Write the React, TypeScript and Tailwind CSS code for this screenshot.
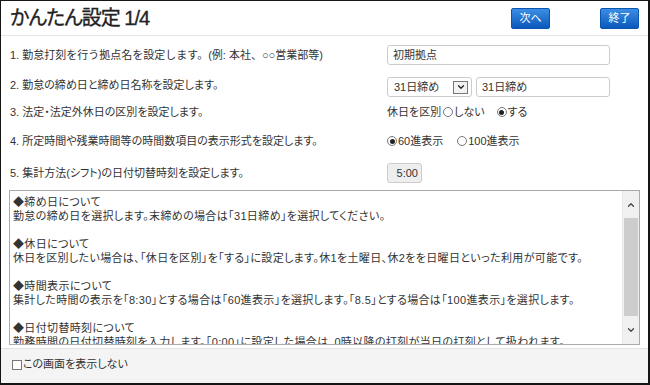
import React from "react";
import { ChevronDown, ChevronUp } from "lucide-react";

const rows = [
  "1. 勤怠打刻を行う拠点名を設定します。(例:  本社、○○営業部等)",
  "2. 勤怠の締め日と締め日名称を設定します。",
  "3. 法定・法定外休日の区別を設定します。",
  "4. 所定時間や残業時間等の時間数項目の表示形式を設定します。",
  "5. 集計方法(シフト)の日付切替時刻を設定します。",
];

const helpLines = [
  "◆締め日について",
  "勤怠の締め日を選択します。末締めの場合は「31日締め」を選択してください。",
  "",
  "◆休日について",
  "休日を区別したい場合は、「休日を区別」を「する」に設定します。休1を土曜日、休2をを日曜日といった利用が可能です。",
  "",
  "◆時間表示について",
  "集計した時間の表示を「8:30」とする場合は「60進表示」を選択します。「8.5」とする場合は「100進表示」を選択します。",
  "",
  "◆日付切替時刻について",
  "勤務時間の日付切替時刻を入力します。「0:00」に設定した場合は、0時以降の打刻が当日の打刻として扱われます。",
];

const Radio = ({ checked }: { checked?: boolean }) => (
  <span className="inline-flex items-center justify-center w-[10px] h-[10px] rounded-full border border-[#777] bg-white mr-[1px]">
    {checked && <span className="w-[5px] h-[5px] rounded-full bg-[#222]" />}
  </span>
);

const BlueButton = ({ label }: { label: string }) => (
  <button className="w-[39px] h-[21px] rounded-[2px] border border-[#0b56ac] bg-gradient-to-b from-[#3b8ee6] to-[#0858bb] text-white text-[11px] leading-none">
    {label}
  </button>
);

const App = () => {
  return (
    <div className="w-[650px] h-[385px] flex flex-col bg-white border-t border-l border-r-2 border-b-2 border-[#151515] text-[#333] text-[11px] font-['Liberation_Sans','Noto_Sans_CJK_JP',sans-serif] [font-feature-settings:'palt']">
      {/* header */}
      <div className="h-[35px] shrink-0 flex items-center justify-between pl-[9px] pr-[9px] border-b border-[#e6e6e6]">
        <h1 className="text-[20px] text-[#222] tracking-[-1px] [-webkit-text-stroke:0.3px_#222]">かんたん設定 1/4</h1>
        <div className="flex gap-[50px]">
          <BlueButton label="次へ" />
          <BlueButton label="終了" />
        </div>
      </div>

      {/* settings rows */}
      <div className="pt-[9px] pl-[9px] pr-[38px]">
        <div className="h-[20px] flex items-center">
          <span className="w-[377px] [font-feature-settings:normal]">{rows[0]}</span>
          <div className="flex-1 h-[20px] flex items-center px-[5px] border border-[#ccc] rounded-[3px]">初期拠点</div>
        </div>
        <div className="h-[20px] mt-[12px] flex items-center">
          <span className="w-[377px] -mt-[3px]">{rows[1]}</span>
          <div className="w-[85px] h-[20px] flex items-center justify-between pl-[6px] pr-[3px] border border-[#ccc] rounded-[3px]">
            <span>31日締め</span>
            <span className="w-[15px] h-[13px] flex items-center justify-center border border-[#777] bg-[#f2f2f2]">
              <ChevronDown size={10} strokeWidth={3} color="#222" />
            </span>
          </div>
          <div className="flex-1 ml-[4px] h-[20px] flex items-center px-[5px] border border-[#ccc] rounded-[3px]">31日締め</div>
        </div>
        <div className="h-[20px] mt-[5px] flex items-center">
          <span className="w-[377px]">{rows[2]}</span>
          <span className="mr-[2px]">休日を区別</span>
          <Radio />
          <span className="mr-[12px]">しない</span>
          <Radio checked />
          <span>する</span>
        </div>
        <div className="h-[20px] mt-[9px] flex items-center">
          <span className="w-[377px]">{rows[3]}</span>
          <Radio checked />
          <span className="mr-[14px]">60進表示</span>
          <Radio />
          <span>100進表示</span>
        </div>
        <div className="h-[20px] mt-[12px] flex items-center">
          <span className="w-[377px]">{rows[4]}</span>
          <div className="w-[35px] h-[20px] flex items-center justify-end pr-[3px] border border-[#ccc] rounded-[3px] bg-[#eee]">5:00</div>
        </div>
      </div>

      {/* help text box */}
      <div className="mt-[7px] mx-[8px] h-[155px] shrink-0 flex border border-[#aaa] bg-white">
        <div className="flex-1 overflow-hidden pt-[4px] pl-[3px] leading-[14px] tracking-[0.35px]">
          {helpLines.map((line, i) => (
            <div key={i} className="h-[14px] whitespace-nowrap">
              {line}
            </div>
          ))}
        </div>
        <div className="w-[17px] flex flex-col bg-[#f0f0f0] border-l border-[#e8e8e8]">
          <div className="h-[27px] flex items-center justify-center">
            <ChevronUp size={10} strokeWidth={3} color="#444" />
          </div>
          <div className="flex-1 mx-[1px] bg-[#cdcdcd]" />
          <div className="h-[28px] flex items-center justify-center">
            <ChevronDown size={10} strokeWidth={3} color="#444" />
          </div>
        </div>
      </div>

      {/* footer */}
      <div className="flex-1 mt-[3px] flex items-center pl-[11px] pb-[3px] bg-[#f4f4f4] border-t border-[#e2e2e2]">
        <span className="w-[10px] h-[10px] border border-[#777] bg-white mr-[1px]" />
        <span>この画面を表示しない</span>
      </div>
    </div>
  );
};

export default App;
